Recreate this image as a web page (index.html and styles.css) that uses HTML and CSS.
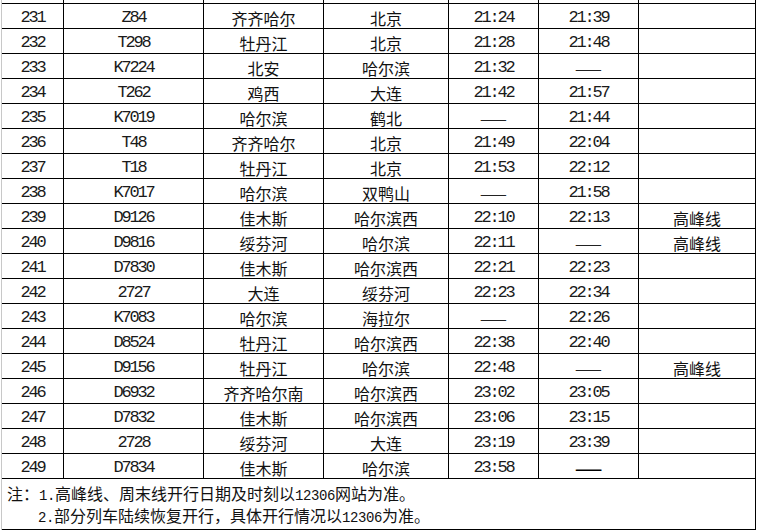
FILE: index.html
```html
<!DOCTYPE html>
<html lang="zh-CN">
<head>
<meta charset="utf-8">
<title>列车时刻表</title>
<link rel="stylesheet" href="styles.css">
</head>
<body>
<div class="sheet">
  <div class="row cut"><div class="c"></div><div class="c"></div><div class="c"></div><div class="c"></div><div class="c"></div><div class="c"></div><div class="c"></div></div>
  <div class="row"><div class="c m">231</div><div class="c m">Z84</div><div class="c">齐齐哈尔</div><div class="c">北京</div><div class="c m">21:24</div><div class="c m">21:39</div><div class="c"></div></div>
  <div class="row"><div class="c m">232</div><div class="c m">T298</div><div class="c">牡丹江</div><div class="c">北京</div><div class="c m">21:28</div><div class="c m">21:48</div><div class="c"></div></div>
  <div class="row"><div class="c m">233</div><div class="c m">K7224</div><div class="c">北安</div><div class="c">哈尔滨</div><div class="c m">21:32</div><div class="c d">——</div><div class="c"></div></div>
  <div class="row"><div class="c m">234</div><div class="c m">T262</div><div class="c">鸡西</div><div class="c">大连</div><div class="c m">21:42</div><div class="c m">21:57</div><div class="c"></div></div>
  <div class="row"><div class="c m">235</div><div class="c m">K7019</div><div class="c">哈尔滨</div><div class="c">鹤北</div><div class="c d">——</div><div class="c m">21:44</div><div class="c"></div></div>
  <div class="row"><div class="c m">236</div><div class="c m">T48</div><div class="c">齐齐哈尔</div><div class="c">北京</div><div class="c m">21:49</div><div class="c m">22:04</div><div class="c"></div></div>
  <div class="row"><div class="c m">237</div><div class="c m">T18</div><div class="c">牡丹江</div><div class="c">北京</div><div class="c m">21:53</div><div class="c m">22:12</div><div class="c"></div></div>
  <div class="row"><div class="c m">238</div><div class="c m">K7017</div><div class="c">哈尔滨</div><div class="c">双鸭山</div><div class="c d">——</div><div class="c m">21:58</div><div class="c"></div></div>
  <div class="row"><div class="c m">239</div><div class="c m">D9126</div><div class="c">佳木斯</div><div class="c">哈尔滨西</div><div class="c m">22:10</div><div class="c m">22:13</div><div class="c">高峰线</div></div>
  <div class="row"><div class="c m">240</div><div class="c m">D9816</div><div class="c">绥芬河</div><div class="c">哈尔滨</div><div class="c m">22:11</div><div class="c d">——</div><div class="c">高峰线</div></div>
  <div class="row"><div class="c m">241</div><div class="c m">D7830</div><div class="c">佳木斯</div><div class="c">哈尔滨西</div><div class="c m">22:21</div><div class="c m">22:23</div><div class="c"></div></div>
  <div class="row"><div class="c m">242</div><div class="c m">2727</div><div class="c">大连</div><div class="c">绥芬河</div><div class="c m">22:23</div><div class="c m">22:34</div><div class="c"></div></div>
  <div class="row"><div class="c m">243</div><div class="c m">K7083</div><div class="c">哈尔滨</div><div class="c">海拉尔</div><div class="c d">——</div><div class="c m">22:26</div><div class="c"></div></div>
  <div class="row"><div class="c m">244</div><div class="c m">D8524</div><div class="c">牡丹江</div><div class="c">哈尔滨西</div><div class="c m">22:38</div><div class="c m">22:40</div><div class="c"></div></div>
  <div class="row"><div class="c m">245</div><div class="c m">D9156</div><div class="c">牡丹江</div><div class="c">哈尔滨</div><div class="c m">22:48</div><div class="c d">——</div><div class="c">高峰线</div></div>
  <div class="row"><div class="c m">246</div><div class="c m">D6932</div><div class="c">齐齐哈尔南</div><div class="c">哈尔滨西</div><div class="c m">23:02</div><div class="c m">23:05</div><div class="c"></div></div>
  <div class="row"><div class="c m">247</div><div class="c m">D7832</div><div class="c">佳木斯</div><div class="c">哈尔滨西</div><div class="c m">23:06</div><div class="c m">23:15</div><div class="c"></div></div>
  <div class="row"><div class="c m">248</div><div class="c m">2728</div><div class="c">绥芬河</div><div class="c">大连</div><div class="c m">23:19</div><div class="c m">23:39</div><div class="c"></div></div>
  <div class="row"><div class="c m">249</div><div class="c m">D7834</div><div class="c">佳木斯</div><div class="c">哈尔滨</div><div class="c m">23:58</div><div class="c d bold">——</div><div class="c"></div></div>
  <div class="notes">
    <p class="line">注：<span class="n">1.</span>高峰线、周末线开行日期及时刻以<span class="n">12306</span>网站为准。</p>
    <p class="line indent"><span class="n">2.</span>部分列车陆续恢复开行，具体开行情况以<span class="n">12306</span>为准。</p>
  </div>
</div>
</body>
</html>
```

FILE: styles.css
```css
* { box-sizing: border-box; }
html, body { margin: 0; padding: 0; background: #fff; }
body {
  font-family: "Noto Sans CJK SC", "Noto Sans", sans-serif;
  font-size: 16px;
  color: #111;
  width: 758px;
  height: 531px;
  overflow: hidden;
}
.sheet {
  margin-left: 1px;
  width: 755px;
  border-left: 1px solid #c8c8c8;
}
.row {
  display: grid;
  grid-template-columns: 62px 140px 120px 125px 90px 100px 117px;
  height: 25px;
  border-bottom: 1px solid #000;
}
.row.cut {
  height: 4px;
  margin-left: -1px;
  grid-template-columns: 63px 140px 120px 125px 90px 100px 117px;
}
.row.cut .c:first-child { border-left: 1px solid #c8c8c8; }
.c {
  border-right: 1px solid #000;
  text-align: center;
  line-height: 20px;
  padding-top: 4px;
  white-space: nowrap;
}
.m {
  font-family: "Liberation Mono", monospace;
  font-size: 17px;
  letter-spacing: -2.2px;
  color: #1a1a1a;
}
.d {
  letter-spacing: 3px;
  padding-left: 3px;
  color: #222;
}
.d.bold { font-weight: 700; color: #000; }
.notes {
  height: 51px;
  border-right: 1px solid #000;
  border-bottom: 1px solid #000;
  padding: 5px 0 0 5px;
}
.line {
  margin: 0;
  line-height: 19px;
  white-space: nowrap;
}
.indent { padding-left: 31px; }
.n {
  font-family: "Liberation Mono", monospace;
  font-size: 14px;
  letter-spacing: -0.4px;
}
```
